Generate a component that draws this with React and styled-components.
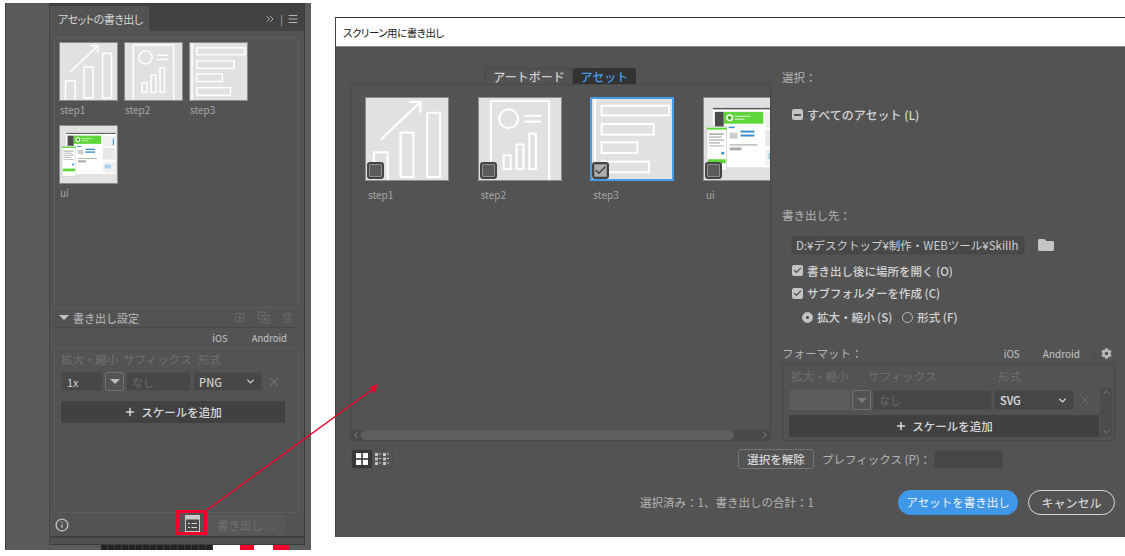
import React from 'react';
import styled, { createGlobalStyle } from 'styled-components';
import { Check, ChevronDown, ChevronLeft, ChevronRight, ChevronsRight, ChevronUp, CopyPlus, Info, Menu, Plus, SquarePlus, Trash2, X } from 'lucide-react';
import { FaCog, FaFolder } from 'react-icons/fa';

const GlobalStyle = createGlobalStyle`
  html, body { margin: 0; padding: 0; background: #fff; }
  body {
    width: 1125px;
    height: 556px;
    overflow: hidden;
    font-family: "Noto Sans CJK JP", "Noto Sans", sans-serif;
    font-size: 11px;
    color: #d0d0d0;
  }
  * { box-sizing: border-box; }
`;

const Page = styled.div`
  position: relative;
  display: flex;
  align-items: flex-start;
  width: 1125px;
  height: 556px;
`;

/* left: panel screenshot */
const PanelShot = styled.div`
  width: 306px;
  height: 547px;
  margin: 3px 0 0 5px;
  padding: 0 6px 0 43px;
  background: #5b5b5b;
  border-left: 1px solid #3e3e3e;
`;

const Panel = styled.div`
  display: flex;
  flex-direction: column;
  height: 542px;
  background: #535353;
  border: 1px solid #3c3c3c;
  border-left-color: #444;
`;

const PanelTabs = styled.div`
  display: flex;
  align-items: stretch;
  justify-content: space-between;
  height: 27px;
  padding-top: 2px;
  background: #424242;
`;

const PanelTab = styled.div`
  display: flex;
  align-items: center;
  width: 99px;
  padding: 0 0 0 8px;
  background: #535353;
  color: #d6d6d6;
  font-size: 11px;
  font-feature-settings: "palt";
  letter-spacing: -0.5px;
  white-space: nowrap;
`;

const PanelTabTools = styled.div`
  display: flex;
  align-items: center;
  gap: 4px;
  padding-right: 5px;
  color: #b5b5b5;
  font-size: 10px;
`;

const AssetFrame = styled.div`
  display: grid;
  grid-template-columns: repeat(3, 59px);
  grid-auto-rows: 83px;
  column-gap: 6px;
  align-content: start;
  height: 271px;
  margin: 6px 5px 0 4px;
  padding: 4px 4px;
  border: 1px solid #5d5d5d;
  border-radius: 3px;
`;

const ThumbCell = styled.div`
  display: flex;
  flex-direction: column;
`;

const ThumbBox = styled.div`
  position: relative;
  flex: none;
  width: ${(p) => p.$size}px;
  height: ${(p) => p.$size}px;
  background: #e1e1e1;
  border: ${(p) => (p.$selected ? '2px solid #4a9be8' : '1px solid #8c8c8c')};
  overflow: hidden;

  svg {
    display: block;
    width: 100%;
    height: 100%;
  }
`;

const ThumbName = styled.div`
  margin: ${(p) => p.$gap}px 0 0 ${(p) => p.$indent}px;
  color: #a6a6a6;
  font-size: 10px;
  line-height: 14px;
`;

const ThumbCheck = styled.span`
  position: absolute;
  left: ${(p) => (p.$on ? 0 : 1)}px;
  bottom: ${(p) => (p.$on ? 0 : 1)}px;
  display: flex;
  align-items: center;
  justify-content: center;
  width: 17px;
  height: 17px;
  border: 2px solid #444;
  border-radius: 3px;
  background: ${(p) => (p.$on ? '#adadad' : '#5a5a5a')};
  box-shadow: inset 0 0 0 1px #8e8e8e;
  color: #444;
`;

const SettingsHead = styled.div`
  display: flex;
  align-items: center;
  justify-content: space-between;
  height: 20px;
  margin: 0 5px 0 4px;
  padding: 0 6px 0 5px;
  border-bottom: 1px solid #484848;
  color: #adadad;
  font-size: 11px;
  font-weight: 500;
`;

const HeadLabel = styled.span`
  display: flex;
  align-items: center;
  gap: 4px;
`;

const Caret = styled.i`
  width: 0;
  height: 0;
  border-left: 5px solid transparent;
  border-right: 5px solid transparent;
  border-top: 5px solid ${(p) => p.$color || '#c4c4c4'};
`;

const DimIcons = styled.span`
  display: flex;
  align-items: center;
  gap: 12px;
  color: #6c6c6c;
`;

const DeviceRow = styled.div`
  display: flex;
  justify-content: flex-end;
  align-items: center;
  gap: ${(p) => p.$gap}px;
  height: 19px;
  padding-right: ${(p) => p.$right}px;
  color: #c8c8c8;
  font-size: 9.5px;
`;

const PanelScaleBox = styled.div`
  height: 166px;
  margin: 0 5px 0 4px;
  padding: 2px 6px;
  border: 1px solid #5c5c5c;
  border-radius: 3px;
`;

const ColumnLabels = styled.div`
  display: flex;
  align-items: center;
  height: 18px;
  padding-left: ${(p) => p.$pad || 0}px;
  color: #707070;
  font-size: 11.5px;
  white-space: nowrap;
`;

const ColumnLabel = styled.span`
  flex: none;
  width: ${(p) => p.$w}px;
`;

const ScaleRow = styled.div`
  display: flex;
  align-items: center;
  gap: 2px;
  height: ${(p) => p.$h}px;
  margin-top: ${(p) => p.$top}px;
`;

const Field = styled.div`
  flex: none;
  display: flex;
  align-items: center;
  justify-content: space-between;
  width: ${(p) => p.$w}px;
  height: 100%;
  padding: 0 5px;
  background: ${(p) => p.$bg || '#474747'};
  border: 1px solid ${(p) => p.$line || '#4e4e4e'};
  border-radius: 2px;
  color: ${(p) => p.$color || '#d0d0d0'};
  font-size: 11px;
  font-weight: ${(p) => p.$weight || 400};
`;

const DropButton = styled.div`
  flex: none;
  display: flex;
  align-items: center;
  justify-content: center;
  width: 19px;
  height: 100%;
  border: 1px solid #727272;
  border-radius: 2px;
`;

const RemoveIcon = styled.span`
  display: flex;
  margin-left: ${(p) => p.$left}px;
  color: #6e6e6e;
`;

const AddScale = styled.div`
  display: flex;
  align-items: center;
  justify-content: center;
  gap: 5px;
  width: ${(p) => p.$w}px;
  height: 22px;
  margin-top: ${(p) => p.$top}px;
  background: #414141;
  color: #d8d8d8;
  font-size: 11.5px;
  font-weight: 500;
`;

const PanelFooter = styled.div`
  display: flex;
  align-items: center;
  height: 23px;
  padding: 0 12px 0 5px;
  color: #c0c0c0;
`;

const ListButton = styled.span`
  display: flex;
  margin-left: 116px;
  margin-top: -3px;
`;

const DisabledExport = styled.div`
  display: flex;
  align-items: center;
  justify-content: center;
  width: 78px;
  height: 20px;
  margin-left: 7px;
  background: #585858;
  color: #717171;
  font-size: 11.5px;
`;

const PanelGrip = styled.div`
  flex: 1;
  border-top: 2px solid #404040;
  background: #505050;
`;

const BelowPanel = styled.div`
  display: flex;
  height: 5px;
  margin-left: 52px;
`;

const BelowSwatch = styled.div`
  flex: none;
  width: ${(p) => p.$w}px;
  background: ${(p) => p.$bg};
`;

/* right: export dialog */
const Dialog = styled.div`
  width: 790px;
  height: 520px;
  margin: 17px 0 0 24px;
  background: #535353;
  border-left: 1px solid #444;
`;

const TitleBar = styled.div`
  display: flex;
  align-items: center;
  height: 30px;
  padding-left: 7px;
  background: #fff;
  border-top: 1px solid #333;
  border-bottom: 1px solid #8a8a8a;
  color: #222;
  font-size: 10.5px;
  font-feature-settings: "palt";
  letter-spacing: -0.5px;
`;

const DialogBody = styled.div`
  padding: 21px 10px 0 14px;
`;

const Columns = styled.div`
  display: flex;
  gap: 11px;
  height: 373px;
`;

const AssetColumn = styled.div`
  display: flex;
  flex-direction: column;
  align-items: center;
  width: 421px;
`;

const Tabs = styled.div`
  display: flex;
  height: 16px;
`;

const Tab = styled.div`
  display: flex;
  align-items: center;
  justify-content: center;
  width: ${(p) => p.$w}px;
  background: ${(p) => (p.$active ? '#333' : '#535353')};
  border: 1px solid ${(p) => (p.$active ? '#333' : '#484848')};
  border-bottom: 0;
  border-radius: 3px 3px 0 0;
  color: ${(p) => (p.$active ? '#4a9be8' : '#d0d0d0')};
  font-size: 12px;
  font-weight: 500;
`;

const AssetPane = styled.div`
  display: flex;
  flex-direction: column;
  align-self: stretch;
  flex: 1;
  border: 1px solid #484848;
  border-radius: 2px;
  overflow: hidden;
`;

const PaneThumbs = styled.div`
  flex: 1;
  display: flex;
  gap: 28.67px;
  padding: 12px 14px;
  overflow: hidden;
`;

const ScrollTrack = styled.div`
  display: flex;
  align-items: center;
  height: 10px;
  background: #4a4a4a;
  color: #8f8f8f;
`;

const ScrollThumb = styled.div`
  width: 373px;
  height: 100%;
  margin: 0 auto 0 0;
  border-radius: 5px;
  background: #5e5e5e;
`;

const OptionsColumn = styled.div`
  flex: 1;
  display: flex;
  flex-direction: column;
`;

const SectionLabel = styled.div`
  height: 18px;
  margin-top: ${(p) => p.$top || 0}px;
  color: #b4b4b4;
  font-size: 11.5px;
  line-height: 18px;
`;

const OptionRow = styled.label`
  display: flex;
  align-items: center;
  gap: ${(p) => p.$gap || 4}px;
  height: 18px;
  margin-top: ${(p) => p.$top || 0}px;
  padding-left: ${(p) => p.$left || 10}px;
  color: #d4d4d4;
  font-size: ${(p) => p.$size || 11.5}px;
  font-weight: 500;
`;

const Tick = styled.span`
  display: flex;
  align-items: center;
  justify-content: center;
  width: 11px;
  height: 11px;
  border-radius: 2px;
  background: #c4c4c4;
  color: #535353;
`;

const Dash = styled.i`
  width: 7px;
  height: 2px;
  background: #535353;
`;

const Radio = styled.span`
  display: flex;
  align-items: center;
  justify-content: center;
  width: 11px;
  height: 11px;
  margin-left: ${(p) => p.$left || 0}px;
  border-radius: 50%;
  border: 1px solid #b8b8b8;
  background: ${(p) => (p.$on ? '#c4c4c4' : 'transparent')};

  &::after {
    content: '';
    display: ${(p) => (p.$on ? 'block' : 'none')};
    width: 3px;
    height: 3px;
    border-radius: 50%;
    background: #444;
  }
`;

const PathRow = styled.div`
  display: flex;
  align-items: center;
  gap: 13px;
  margin: 12px 0 7px 9px;
  color: #c4c4c4;
`;

const PathField = styled.div`
  width: 234px;
  height: 19px;
  padding: 0 4px;
  background: #484848;
  border: 1px solid #4d4d4d;
  border-radius: 2px;
  color: #cfcfcf;
  font-size: 11.5px;
  line-height: 17px;
  white-space: nowrap;
`;

const FormatHead = styled.div`
  display: flex;
  align-items: center;
  justify-content: space-between;
  height: 18px;
  margin-top: 18px;
`;

const FormatTools = styled.div`
  display: flex;
  align-items: center;
  gap: 23px;
  color: #c4c4c4;
  font-size: 10px;
`;

const GearBox = styled.span`
  display: flex;
  padding-left: 6px;
  margin-left: -9px;
  margin-right: 3px;
  border-left: 1px solid #484848;
  color: #b8b8b8;
`;

const FormatBox = styled.div`
  display: flex;
  height: 78px;
  margin-top: 1px;
  padding: 3px 2px 3px 6px;
  border: 1px solid #484848;
  border-radius: 2px;
`;

const FormatMain = styled.div`
  width: 310px;
`;

const VScroll = styled.div`
  display: flex;
  flex-direction: column;
  justify-content: space-between;
  align-items: center;
  width: 12px;
  margin: 20px 0 0 1px;
  background: #4c4c4c;
  color: #8a8a8a;
`;

const ToolBar = styled.div`
  display: flex;
  align-items: center;
  height: 20px;
  margin-top: 8px;
`;

const ViewToggle = styled.div`
  display: flex;
  height: 20px;
  margin-left: 1px;
  border: 1px solid #4d4d4d;
  border-radius: 2px;
`;

const ViewButton = styled.div`
  display: flex;
  align-items: center;
  justify-content: center;
  width: 20px;
  background: ${(p) => (p.$active ? '#383838' : 'transparent')};

  svg {
    display: block;
  }
`;

const GhostButton = styled.div`
  display: flex;
  align-items: center;
  justify-content: center;
  width: 76px;
  height: 20px;
  margin-left: 345px;
  border: 1px solid #747474;
  border-radius: 3px;
  color: #d8d8d8;
  font-size: 11.5px;
  font-weight: 500;
`;

const PrefixLabel = styled.span`
  margin-left: 8px;
  color: #b4b4b4;
  font-size: 11.5px;
  width: 112px;
`;

const PrefixInput = styled.div`
  width: 69px;
  height: 19px;
  background: #474747;
  border: 1px solid #4d4d4d;
  border-radius: 2px;
`;

const DialogFooter = styled.div`
  display: flex;
  align-items: center;
  height: 26px;
  margin-top: 20px;
  padding-left: 290px;
`;

const StatusText = styled.span`
  width: 258px;
  color: #b4b4b4;
  font-size: 11.5px;
  white-space: nowrap;
`;

const PillButton = styled.div`
  display: flex;
  align-items: center;
  justify-content: center;
  width: ${(p) => p.$w}px;
  height: 25px;
  margin-left: ${(p) => p.$left || 0}px;
  border-radius: 13px;
  border: ${(p) => (p.$primary ? '0' : '1.5px solid #d8d8d8')};
  background: ${(p) => (p.$primary ? '#3f97e8' : 'transparent')};
  color: ${(p) => (p.$primary ? '#f2f2f2' : '#e0e0e0')};
  font-size: ${(p) => (p.$primary ? 11.5 : 12)}px;
`;

const Annotation = styled.svg`
  position: absolute;
  left: 0;
  top: 0;
  pointer-events: none;
`;

const Line = (props) => <rect fill="none" stroke="#fff" strokeWidth="2.1" {...props} />;

const Step1Art = () => (
  <svg viewBox="0 0 83 83">
    <Line x="8" y="55" width="14" height="40" />
    <Line x="35" y="35" width="13" height="45" />
    <Line x="62" y="15" width="13" height="65" />
    <path d="M15 42 L55 4 M44 4 H55 V15" fill="none" stroke="#fff" strokeWidth="2.2" />
  </svg>
);

const Step2Art = () => (
  <svg viewBox="0 0 83 83">
    <Line x="12" y="3" width="59" height="90" />
    <circle cx="30" cy="21" r="9.5" fill="none" stroke="#fff" strokeWidth="2.1" />
    <path d="M46 18 H63 M46 24 H63" stroke="#fff" strokeWidth="2.2" />
    <Line x="25" y="58" width="7" height="14" />
    <Line x="38" y="47" width="7" height="25" />
    <Line x="51" y="36" width="6.5" height="36" />
  </svg>
);

const Step3Art = () => (
  <svg viewBox="0 0 83 83">
    <path d="M3 0 V83" stroke="#fff" strokeWidth="2.1" />
    <Line x="10" y="7" width="70" height="10" />
    <Line x="10" y="26" width="54" height="11" />
    <Line x="10" y="45" width="37" height="11" />
    <Line x="10" y="65" width="49" height="11" />
  </svg>
);

const UiArt = () => (
  <svg viewBox="0 0 83 83">
    <rect x="9" y="10" width="72" height="60" fill="#fff" />
    <rect x="9" y="10" width="72" height="1.5" fill="#555" />
    <rect x="11" y="14" width="9" height="16" fill="#4b4b4b" />
    <rect x="20" y="14" width="40" height="12" fill="#5fd63a" />
    <circle cx="26" cy="20" r="3.5" fill="#fff" />
    <circle cx="26" cy="20" r="2" fill="#4aa82c" />
    <rect x="31" y="18" width="16" height="1" fill="#dff5d6" />
    <rect x="31" y="21" width="10" height="1" fill="#dff5d6" />
    <rect x="25" y="29" width="6" height="1.5" fill="#3a8fd0" />
    <rect x="37" y="33" width="14" height="2" fill="#3a8fd0" />
    <rect x="37" y="37" width="14" height="2" fill="#3a8fd0" />
    <rect x="26" y="35" width="8" height="6" fill="#ccc" />
    <rect x="26" y="47" width="28" height="1" fill="#999" />
    <rect x="26" y="50" width="12" height="3" fill="#aaa" />
    <rect x="62" y="15" width="18" height="15" fill="#f0f0f0" />
    <rect x="62" y="32" width="18" height="17" fill="#e8e8e8" />
    <rect x="62" y="52" width="18" height="16" fill="#f0f0f0" />
    <rect x="65" y="56" width="9" height="6" fill="#a9d2ec" />
    <rect x="77" y="18" width="1.5" height="10" fill="#3a8fd0" />
    <rect x="3" y="29" width="20" height="44" fill="#fff" stroke="#bbb" strokeWidth="0.5" />
    <rect x="3" y="30" width="20" height="2" fill="#5fd63a" />
    <rect x="5" y="36" width="15" height="1" fill="#777" />
    <rect x="5" y="39" width="13" height="1" fill="#999" />
    <rect x="5" y="42" width="15" height="1" fill="#999" />
    <rect x="5" y="45" width="11" height="1" fill="#999" />
    <rect x="5" y="48" width="15" height="1" fill="#aaa" />
    <circle cx="19" cy="56" r="1.5" fill="#3a8fd0" />
    <rect x="4" y="62" width="18" height="4" fill="#5fd63a" />
  </svg>
);

const ART = { step1: Step1Art, step2: Step2Art, step3: Step3Art, ui: UiArt };
const NAMES = ['step1', 'step2', 'step3', 'ui'];

const Thumb = ({ name, size, gap, indent, selected, check }) => {
  const Art = ART[name];
  return (
    <ThumbCell>
      <ThumbBox $size={size} $selected={selected}>
        <Art />
        {check && (
          <ThumbCheck $on={selected}>
            {selected && <Check size={11} strokeWidth={3} />}
          </ThumbCheck>
        )}
      </ThumbBox>
      <ThumbName $gap={gap} $indent={indent}>{name}</ThumbName>
    </ThumbCell>
  );
};

const GridIcon = () => (
  <svg width="12" height="12" viewBox="0 0 12 12" fill="#fff">
    <rect width="5.2" height="5.2" />
    <rect x="6.8" width="5.2" height="5.2" />
    <rect y="6.8" width="5.2" height="5.2" />
    <rect x="6.8" y="6.8" width="5.2" height="5.2" />
  </svg>
);

const ListGridIcon = () => (
  <svg width="14" height="12" viewBox="0 0 14 12" fill="#c4c4c4">
    {[0, 4.5, 9].map((y) => (
      <g key={y}>
        <rect y={y} width="3" height="3" />
        <rect x="4" y={y + 0.5} width="2" height="1" />
        <rect x="8" y={y} width="3" height="3" />
        <rect x="12" y={y + 0.5} width="2" height="1" />
      </g>
    ))}
  </svg>
);

const ExportListIcon = () => (
  <svg width="15" height="17" viewBox="0 0 15 17" fill="none">
    <rect x="0.5" y="0.5" width="14" height="16" fill="#4a4a4a" stroke="#c8c8c8" />
    <rect x="0.5" y="0.5" width="14" height="4" fill="#c8c8c8" />
    <path d="M3 8.5 H5 M6.5 8.5 H12 M3 12.5 H5 M6.5 12.5 H12" stroke="#d8d8d8" strokeWidth="1.2" />
  </svg>
);

const App = () => (
  <Page>
    <GlobalStyle />

    <PanelShot>
      <Panel>
        <PanelTabs>
          <PanelTab>アセットの書き出し</PanelTab>
          <PanelTabTools>
            <ChevronsRight size={12} />
            <span>|</span>
            <Menu size={12} />
          </PanelTabTools>
        </PanelTabs>

        <AssetFrame>
          {NAMES.map((name) => (
            <Thumb key={name} name={name} size={59} gap={2} indent={1} />
          ))}
        </AssetFrame>

        <SettingsHead>
          <HeadLabel><Caret />書き出し設定</HeadLabel>
          <DimIcons>
            <SquarePlus size={11} />
            <CopyPlus size={13} />
            <Trash2 size={11} />
          </DimIcons>
        </SettingsHead>
        <DeviceRow $gap={24} $right={17}>
          <span>iOS</span>
          <span>Android</span>
        </DeviceRow>

        <PanelScaleBox>
          <ColumnLabels>
            <ColumnLabel $w={62}>拡大・縮小</ColumnLabel>
            <ColumnLabel $w={75}>サフィックス</ColumnLabel>
            <ColumnLabel $w={30}>形式</ColumnLabel>
          </ColumnLabels>
          <ScaleRow $h={19} $top={4}>
            <Field $w={42} $bg="#484848">1x</Field>
            <DropButton><Caret $color="#bbb" /></DropButton>
            <Field $w={65} $color="#6c6c6c">なし</Field>
            <Field $w={69} $weight={500}>PNG<ChevronDown size={11} strokeWidth={3} /></Field>
            <RemoveIcon $left={3}><X size={14} /></RemoveIcon>
          </ScaleRow>
          <AddScale $w={224} $top={10}><Plus size={12} strokeWidth={3} />スケールを追加</AddScale>
        </PanelScaleBox>

        <PanelFooter>
          <Info size={14} strokeWidth={2.4} />
          <ListButton><ExportListIcon /></ListButton>
          <DisabledExport>書き出し ...</DisabledExport>
        </PanelFooter>
        <PanelGrip />
      </Panel>
      <BelowPanel>
        <BelowSwatch $w={112} $bg="repeating-linear-gradient(90deg, #222 0 6px, #3a3a3a 6px 7px)" />
        <BelowSwatch $w={27} $bg="#fff" />
        <BelowSwatch $w={14} $bg="#f0002a" />
        <BelowSwatch $w={19} $bg="#fff" />
        <BelowSwatch $w={16} $bg="#f0002a" />
      </BelowPanel>
    </PanelShot>

    <Dialog>
      <TitleBar>スクリーン用に書き出し</TitleBar>
      <DialogBody>
        <Columns>
          <AssetColumn>
            <Tabs>
              <Tab $w={88}>アートボード</Tab>
              <Tab $w={63} $active>アセット</Tab>
            </Tabs>
            <AssetPane>
              <PaneThumbs>
                {NAMES.map((name) => (
                  <Thumb
                    key={name}
                    name={name}
                    size={84}
                    gap={7}
                    indent={3}
                    selected={name === 'step3'}
                    check
                  />
                ))}
              </PaneThumbs>
              <ScrollTrack>
                <ChevronLeft size={10} />
                <ScrollThumb />
                <ChevronRight size={10} />
              </ScrollTrack>
            </AssetPane>
          </AssetColumn>

          <OptionsColumn>
            <SectionLabel>選択：</SectionLabel>
            <OptionRow $top={20} $size={12}><Tick><Dash /></Tick>すべてのアセット (L)</OptionRow>
            <SectionLabel $top={82}>書き出し先：</SectionLabel>
            <PathRow>
              <PathField>D:¥デスクトップ¥制作・WEBツール¥Skillh</PathField>
              <FaFolder size={16} />
            </PathRow>
            <OptionRow><Tick><Check size={9} strokeWidth={3.5} /></Tick>書き出し後に場所を開く (O)</OptionRow>
            <OptionRow $top={5}><Tick><Check size={9} strokeWidth={3.5} /></Tick>サブフォルダーを作成 (C)</OptionRow>
            <OptionRow $top={6} $left={20}>
              <Radio $on />拡大・縮小 (S)
              <Radio $left={6} />形式 (F)
            </OptionRow>

            <FormatHead>
              <SectionLabel>フォーマット：</SectionLabel>
              <FormatTools>
                <span>iOS</span>
                <span>Android</span>
                <GearBox><FaCog size={11} /></GearBox>
              </FormatTools>
            </FormatHead>
            <FormatBox>
              <FormatMain>
                <ColumnLabels $pad={2}>
                  <ColumnLabel $w={77}>拡大・縮小</ColumnLabel>
                  <ColumnLabel $w={130}>サフィックス</ColumnLabel>
                  <ColumnLabel $w={30}>形式</ColumnLabel>
                </ColumnLabels>
                <ScaleRow $h={20} $top={5}>
                  <Field $w={61} $bg="#5c5c5c" $line="#5c5c5c" />
                  <DropButton><Caret $color="#7c7c7c" /></DropButton>
                  <Field $w={119} $color="#6c6c6c">なし</Field>
                  <Field $w={80} $weight={500} $color="#e0e0e0">SVG<ChevronDown size={11} strokeWidth={3} /></Field>
                  <RemoveIcon $left={3}><X size={12} /></RemoveIcon>
                </ScaleRow>
                <AddScale $w={310} $top={5}><Plus size={12} strokeWidth={3} />スケールを追加</AddScale>
              </FormatMain>
              <VScroll>
                <ChevronUp size={11} />
                <ChevronDown size={11} />
              </VScroll>
            </FormatBox>
          </OptionsColumn>
        </Columns>

        <ToolBar>
          <ViewToggle>
            <ViewButton $active><GridIcon /></ViewButton>
            <ViewButton><ListGridIcon /></ViewButton>
          </ViewToggle>
          <GhostButton>選択を解除</GhostButton>
          <PrefixLabel>プレフィックス (P)：</PrefixLabel>
          <PrefixInput />
        </ToolBar>

        <DialogFooter>
          <StatusText>選択済み：1、書き出しの合計：1</StatusText>
          <PillButton $primary $w={120}>アセットを書き出し</PillButton>
          <PillButton $w={87} $left={10}>キャンセル</PillButton>
        </DialogFooter>
      </DialogBody>
    </Dialog>

    {/* red callout drawn over both screenshots */}
    <Annotation width="1125" height="556" viewBox="0 0 1125 556">
      <rect x="177.5" y="511.5" width="28" height="22" fill="none" stroke="#f0002a" strokeWidth="3" />
      <path d="M207 510 L373 389" stroke="#f0002a" strokeWidth="1.4" />
      <path d="M378 384.5 L369.5 387 L374.5 393.5 Z" fill="#f0002a" />
    </Annotation>
  </Page>
);

export default App;
